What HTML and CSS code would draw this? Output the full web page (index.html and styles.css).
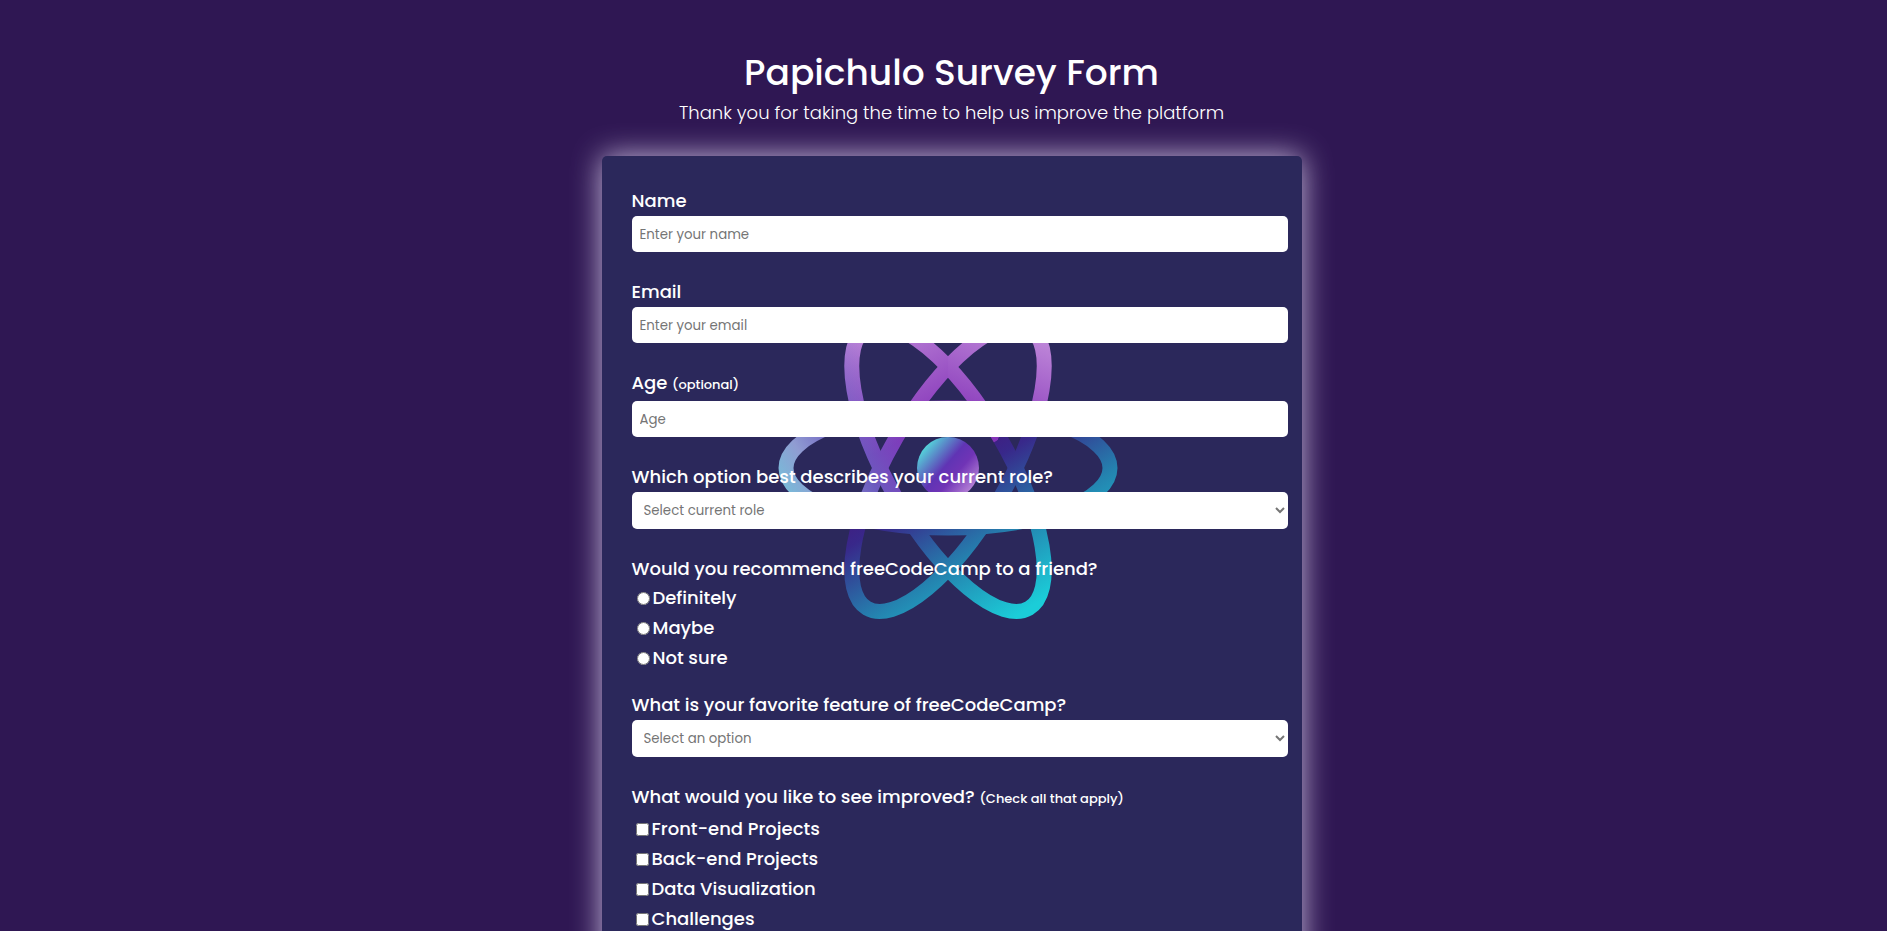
FILE: index.html
```html
<!DOCTYPE html>
<html lang="en">
<head>
<meta charset="utf-8">
<meta name="viewport" content="width=device-width, initial-scale=1">
<title>Papichulo Survey Form</title>
<link rel="stylesheet" href="styles.css">
</head>
<body>
<main class="page">
  <header class="header">
    <h1 class="title">Papichulo Survey Form</h1>
    <p class="subtitle">Thank you for taking the time to help us improve the platform</p>
  </header>
  <form class="card">
    <svg class="atom" viewBox="-180 -160 360 320" aria-hidden="true">
      <defs>
        <linearGradient id="upper-left" gradientUnits="userSpaceOnUse" x1="-55" y1="-160" x2="0" y2="-50">
          <stop offset="0" stop-color="#c48fdc"/><stop offset="1" stop-color="#8434b8"/>
        </linearGradient>
        <linearGradient id="upper-right" gradientUnits="userSpaceOnUse" x1="40" y1="-160" x2="0" y2="-50">
          <stop offset="0" stop-color="#c48fdc"/><stop offset="1" stop-color="#8434b8"/>
        </linearGradient>
        <linearGradient id="tint" gradientUnits="userSpaceOnUse" x1="-165" y1="30" x2="-35" y2="-50">
          <stop offset="0" stop-color="#74c0da"/><stop offset=".25" stop-color="#909cd2"/><stop offset=".55" stop-color="#6664c0" stop-opacity=".8"/><stop offset="1" stop-color="#6a50c4" stop-opacity="0"/>
        </linearGradient>
        <linearGradient id="lower" gradientUnits="userSpaceOnUse" x1="0" y1="0" x2="84" y2="138">
          <stop offset="0" stop-color="#3d2184"/><stop offset=".1" stop-color="#38288a"/><stop offset=".55" stop-color="#2484b0"/><stop offset="1" stop-color="#1bcdd8"/>
        </linearGradient>
        <linearGradient id="core" x1="0.1" y1="0.15" x2="0.9" y2="0.85">
          <stop offset="0" stop-color="#54dcdc"/><stop offset=".45" stop-color="#6034b4"/><stop offset=".65" stop-color="#7034b6"/><stop offset="1" stop-color="#b986d8"/>
        </linearGradient>
        <mask id="orbits" maskUnits="userSpaceOnUse" x="-180" y="-160" width="360" height="320">
          <g fill="none" stroke="#fff" stroke-width="15">
            <ellipse rx="162" ry="60"/>
            <ellipse rx="162" ry="60" transform="rotate(60)"/>
            <ellipse rx="162" ry="60" transform="rotate(120)"/>
          </g>
        </mask>
      </defs>
      <g mask="url(#orbits)">
        <path d="M0-160V15L-52 30-180 60V-160Z" fill="url(#upper-left)"/>
        <path d="M0-160H180V-67H64L50-28 0 15Z" fill="url(#upper-right)"/>
        <path d="M-180-160H180V-67H64L50-28-52 30-180 60Z" fill="url(#tint)"/>
        <path d="M-180 60L-52 30 50-28 64-67H180V160H-180Z" fill="url(#lower)"/>
      </g>
      <circle r="31" fill="url(#core)"/>
    </svg>

    <div class="field">
      <label class="label" for="name">Name</label>
      <input class="control" id="name" type="text" placeholder="Enter your name">
    </div>
    <div class="field">
      <label class="label" for="email">Email</label>
      <input class="control" id="email" type="email" placeholder="Enter your email">
    </div>
    <div class="field">
      <label class="label label-clued" for="age">Age <span class="clue">(optional)</span></label>
      <input class="control" id="age" type="number" placeholder="Age">
    </div>
    <div class="field">
      <label class="label" for="role">Which option best describes your current role?</label>
      <select class="control select" id="role"><option>Select current role</option><option>Student</option></select>
    </div>
    <fieldset class="field group">
      <legend class="label">Would you recommend freeCodeCamp to a friend?</legend>
      <label class="choice"><input class="radio" type="radio" name="recommend">Definitely</label>
      <label class="choice"><input class="radio" type="radio" name="recommend">Maybe</label>
      <label class="choice"><input class="radio" type="radio" name="recommend">Not sure</label>
    </fieldset>
    <div class="field">
      <label class="label" for="feature">What is your favorite feature of freeCodeCamp?</label>
      <select class="control select" id="feature"><option>Select an option</option><option>Challenges</option></select>
    </div>
    <fieldset class="field group">
      <legend class="label label-clued">What would you like to see improved? <span class="clue">(Check all that apply)</span></legend>
      <label class="choice"><input class="check" type="checkbox">Front-end Projects</label>
      <label class="choice"><input class="check" type="checkbox">Back-end Projects</label>
      <label class="choice"><input class="check" type="checkbox">Data Visualization</label>
      <label class="choice"><input class="check" type="checkbox">Challenges</label>
    </fieldset>
  </form>
</main>
</body>
</html>
```
FILE: styles.css
```css
* { box-sizing: border-box; }

body {
  margin: 0;
  height: 100vh;
  overflow: hidden;
  background: #2f1753;
  color: #fff;
  font-family: Poppins, Inter, sans-serif;
  font-size: 18px;
  font-weight: 500;
}

.page { padding: 48px 0 0 16px; }

.header { text-align: center; padding-bottom: 29px; }
.title { margin: 0; font-size: 36px; font-weight: 500; line-height: 49px; }
.subtitle { margin: 0; padding-top: 2px; font-size: 18px; font-weight: 300; line-height: 28px; }

.card {
  position: relative;
  max-width: 700px;
  margin: 0 auto;
  padding: 30px 14px 30px 30px;
  border-radius: 5px;
  background: #2b285b;
  box-shadow: 0 0 30px #c8bcdc;
}

.atom {
  position: absolute;
  top: 152px;
  left: 50%;
  width: 360px;
  margin-left: -184px;
}

.field {
  position: relative;
  min-width: 0;
  margin: 0 0 25px;
  padding: 0;
  border: 0;
}

.label {
  display: block;
  padding: 0 0 1px;
  font-size: 18px;
  line-height: 29px;
}
.label-clued { line-height: 30px; }
.group { margin-bottom: 17px; }
.group .label { padding: 0; }
.clue { font-size: 13px; }

.control {
  display: block;
  width: 100%;
  height: 36px;
  padding: 2px 8px 0;
  border: 0;
  border-radius: 5px;
  background: #fff;
  color: #757575;
  font-family: inherit;
}
.control::placeholder { color: #757575; }
.select { height: 37px; padding: 0 8px; }

.choice { display: flex; align-items: center; height: 30px; line-height: 30px; }
.radio, .check { width: 13px; height: 13px; margin: 0 3px 0 5px; }
.check { margin-left: 4px; }
```
